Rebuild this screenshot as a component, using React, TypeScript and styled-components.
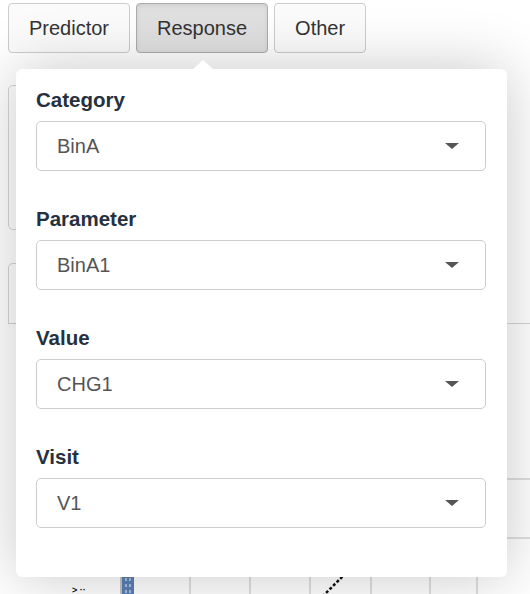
import React from "react";
import styled, { createGlobalStyle } from "styled-components";

const GlobalStyle = createGlobalStyle`
  html, body {
    margin: 0;
    padding: 0;
    background: #ffffff;
    font-family: "Liberation Sans", Arial, Helvetica, sans-serif;
  }
  #root {
    width: 530px;
    height: 594px;
    overflow: hidden;
  }
`;

const Page = styled.div`
  position: relative;
  width: 530px;
  height: 594px;
  padding: 3px 0 0 8px;
  box-sizing: border-box;
`;

const ButtonRow = styled.div`
  display: flex;
  gap: 6px;
`;

const TabButton = styled.button<{ $active?: boolean }>`
  height: 50px;
  padding: 0 20px;
  border: 1px solid ${(p) => (p.$active ? "#adadad" : "#cccccc")};
  border-radius: 4px;
  background: ${(p) => (p.$active ? "#e0e0e0" : "#fbfbfb")};
  box-shadow: ${(p) => (p.$active ? "inset 0 2px 4px rgba(0,0,0,0.08)" : "none")};
  color: #333333;
  font-family: inherit;
  font-size: 20px;
  line-height: 23px;
`;

const Card = styled.div`
  margin-top: 32px;
  width: 420px;
  height: 145px;
  border: 1px solid #d6d6d6;
  border-radius: 5px;
  box-sizing: border-box;
`;

const TabHeader = styled.div`
  margin-top: 33px;
  height: 61px;
  display: flex;
  border-bottom: 1px solid #d3d3d3;
  box-sizing: border-box;
`;

const HeaderTab = styled.div`
  width: 140px;
  border: 1px solid #d6d6d6;
  border-bottom: none;
  border-radius: 5px 5px 0 0;
`;

const Plot = styled.svg`
  display: block;
  width: 522px;
  height: 270px;
`;

const Popover = styled.div`
  position: absolute;
  left: 16px;
  top: 69px;
  width: 491px;
  height: 508px;
  box-sizing: border-box;
  padding: 19px 21px 12px 20px;
  background: #ffffff;
  border-radius: 6px;
  box-shadow: 0 0 60px rgba(0, 0, 0, 0.22);

  &::before {
    content: "";
    position: absolute;
    top: -9px;
    left: 177px;
    border-left: 10px solid transparent;
    border-right: 10px solid transparent;
    border-bottom: 9px solid #ffffff;
  }
`;

const Field = styled.div`
  margin-bottom: 36px;
`;

const Label = styled.div`
  font-size: 20.5px;
  line-height: 23px;
  font-weight: 700;
  color: #263140;
  margin-bottom: 10px;
`;

const Select = styled.div`
  height: 50px;
  box-sizing: border-box;
  border: 1px solid #cccccc;
  border-radius: 5px;
  padding: 0 26px 0 20px;
  display: flex;
  align-items: center;
  justify-content: space-between;
  font-size: 20px;
  line-height: 23px;
  color: #555555;
`;

const Caret = styled.span`
  width: 0;
  height: 0;
  border-left: 7px solid transparent;
  border-right: 7px solid transparent;
  border-top: 6px solid #555555;
`;

const fields = [
  { label: "Category", value: "BinA" },
  { label: "Parameter", value: "BinA1" },
  { label: "Value", value: "CHG1" },
  { label: "Visit", value: "V1" },
];

const gridX = [182, 242, 302, 363, 422, 469];

function App() {
  return (
    <>
      <GlobalStyle />
      <Page>
        <ButtonRow>
          <TabButton>Predictor</TabButton>
          <TabButton $active>Response</TabButton>
          <TabButton>Other</TabButton>
        </ButtonRow>
        <Card />
        <TabHeader>
          <HeaderTab />
        </TabHeader>
        <Plot viewBox="0 0 522 270">
          <line x1="100" y1="155" x2="522" y2="155" stroke="#d4d4d4" strokeWidth="1.5" />
          <line x1="100" y1="214" x2="522" y2="214" stroke="#d4d4d4" strokeWidth="1.5" />
          {gridX.map((x) => (
            <line key={x} x1={x} y1="140" x2={x} y2="270" stroke="#d4d4d4" strokeWidth="1.5" />
          ))}
          <line x1="113" y1="140" x2="113" y2="270" stroke="#8a8a8a" strokeWidth="1" />
          <rect x="114" y="230" width="12" height="40" fill="#5b80b5" />
          <line x1="118" y1="230" x2="118" y2="270" stroke="#dfe7f2" strokeWidth="1.2" strokeDasharray="3 3" />
          <line x1="122" y1="230" x2="122" y2="270" stroke="#dfe7f2" strokeWidth="1.2" strokeDasharray="3 3" />
          <line x1="352" y1="235" x2="292" y2="295" stroke="#111" strokeWidth="2.5" strokeDasharray="3 2" />
          <text x="64" y="269" fontSize="9" fontWeight="700" fill="#111" fontFamily="Liberation Sans, sans-serif">
            {"> ··"}
          </text>
        </Plot>
        <Popover>
          {fields.map((f) => (
            <Field key={f.label}>
              <Label>{f.label}</Label>
              <Select>
                <span>{f.value}</span>
                <Caret />
              </Select>
            </Field>
          ))}
        </Popover>
      </Page>
    </>
  );
}

export default App;
